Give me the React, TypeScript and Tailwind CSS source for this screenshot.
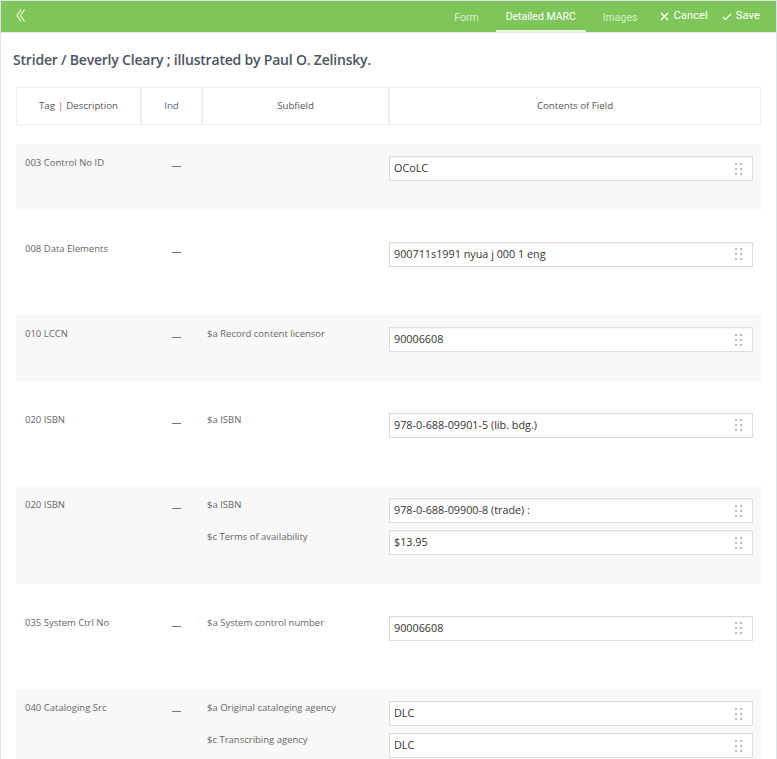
import React from "react";

type Sub = { label: string; value: string };
type Field = { tag: string; subs: Sub[] };

const fields: Field[] = [
  { tag: "003 Control No ID", subs: [{ label: "", value: "OCoLC" }] },
  { tag: "008 Data Elements", subs: [{ label: "", value: "900711s1991 nyua j 000 1 eng" }] },
  { tag: "010 LCCN", subs: [{ label: "$a Record content licensor", value: "90006608" }] },
  { tag: "020 ISBN", subs: [{ label: "$a ISBN", value: "978-0-688-09901-5 (lib. bdg.)" }] },
  {
    tag: "020 ISBN",
    subs: [
      { label: "$a ISBN", value: "978-0-688-09900-8 (trade) :" },
      { label: "$c Terms of availability", value: "$13.95" },
    ],
  },
  { tag: "035 System Ctrl No", subs: [{ label: "$a System control number", value: "90006608" }] },
  {
    tag: "040 Cataloging Src",
    subs: [
      { label: "$a Original cataloging agency", value: "DLC" },
      { label: "$c Transcribing agency", value: "DLC" },
    ],
  },
];

const Handle = () => (
  <svg width="8" height="12" viewBox="0 0 8 12" className="shrink-0">
    {[0, 5].map((x) =>
      [0, 5, 10].map((y) => <rect key={`${x}-${y}`} x={x + 1} y={y} width="2" height="2" fill="#b9b9b9" />)
    )}
  </svg>
);

const FieldInput = ({ value }: { value: string }) => (
  <div className="h-[25px] flex items-center justify-between border border-[#dcdcdc] bg-white pl-[4px] pr-[10px] shadow-[inset_0_1px_1px_rgba(0,0,0,0.04)]">
    <span className="text-[10.8px] text-[#333]">{value}</span>
    <Handle />
  </div>
);

export default function App() {
  return (
    <div className="min-h-screen border border-[#dde3ea] bg-white" style={{ fontFamily: '"Open Sans", sans-serif' }}>
      {/* top bar */}
      <div className="h-[31px] bg-[#7fc65a] flex items-center pl-[15px] pr-[16px]">
        <svg width="10" height="13" viewBox="0 0 10 13" className="mb-[2px]">
          <polyline points="5,0.5 1,6.5 5,12.5" fill="none" stroke="#fffbe0" strokeWidth="1.1" />
          <polyline points="8.5,0.5 4.5,6.5 8.5,12.5" fill="none" stroke="#fffbe0" strokeWidth="1.1" />
        </svg>
        <div className="ml-auto flex items-stretch h-full" style={{ fontFamily: "Roboto, sans-serif" }}>
          <div className="px-[11px] flex items-center text-[10.5px] text-[#d6efc6] mt-[2px]">Form</div>
          <div className="w-[90px] flex items-center justify-center text-[10.5px] text-white border-b-2 border-[#e8f6e0] mt-[2px] mx-[6px]">Detailed MARC</div>
          <div className="px-[11px] flex items-center text-[10.5px] text-[#d6efc6] mt-[2px]">Images</div>
          <div className="ml-[12px] flex items-center gap-[4px] text-[11.3px] text-white">
            <svg width="9" height="9" viewBox="0 0 9 9">
              <path d="M1 1 L8 8 M8 1 L1 8" stroke="white" strokeWidth="1.3" />
            </svg>
            Cancel
          </div>
          <div className="ml-[14px] flex items-center gap-[4px] text-[11.3px] text-white">
            <svg width="10" height="8" viewBox="0 0 10 8">
              <polyline points="1,4 3.5,6.5 9,1" fill="none" stroke="white" strokeWidth="1.2" />
            </svg>
            Save
          </div>
        </div>
      </div>
      <div className="h-px bg-[#e4e7ea]" />

      <div className="px-[15px]">
        <h1 className="mt-[17px] ml-[-3px] text-[14px] font-semibold tracking-[-0.2px] text-[#4a5463] leading-[20px]">
          Strider / Beverly Cleary ; illustrated by Paul O. Zelinsky.
        </h1>

        {/* table head */}
        <div className="mt-[17px] grid grid-cols-[125px_61px_187px_1fr] h-[38px] border border-[#eeeeee] text-[9.7px] text-[#555]">
          <div className="flex items-center justify-center border-r-2 border-[#eeeeee]">
            Tag <span className="mx-[3px] text-[#d9534f]">|</span> Description
          </div>
          <div className="flex items-center justify-center border-r-2 border-[#eeeeee] text-[#4a6b8c]">Ind</div>
          <div className="flex items-center justify-center border-r-2 border-[#eeeeee]">Subfield</div>
          <div className="flex items-center justify-center">Contents of Field</div>
        </div>

        {/* rows */}
        <div className="mt-[19px] flex flex-col gap-[19.5px]">
          {fields.map((f, i) => (
            <div
              key={i}
              className={`grid grid-cols-[125px_61px_187px_1fr] pt-[12px] pb-[29px] ${i % 2 === 0 ? "bg-[#f8f8f8]" : "bg-white"}`}
            >
              <div className="pl-[9px] pt-px text-[9.5px] leading-[12px] text-[#666]">{f.tag}</div>
              <div className="pl-[31px] pt-[10px]">
                <div className="w-[9px] h-px bg-[#5d7894]" />
              </div>
              <div className="col-span-2 flex flex-col gap-[7px]">
                {f.subs.map((s, j) => (
                  <div key={j} className="grid grid-cols-[187px_1fr]">
                    <div className="pl-[5px] pt-px text-[9.5px] leading-[12px] text-[#666]">{s.label}</div>
                    <div className="pr-[8px]">
                      <FieldInput value={s.value} />
                    </div>
                  </div>
                ))}
              </div>
            </div>
          ))}
        </div>
      </div>
    </div>
  );
}
